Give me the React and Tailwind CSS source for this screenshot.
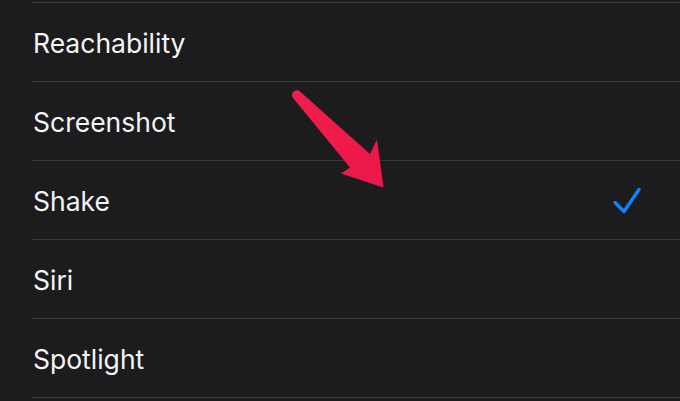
import React from 'react';

const items = ['Reachability', 'Screenshot', 'Shake', 'Siri', 'Spotlight'];

export default function App() {
    return (
        <div className="relative w-[680px] h-[401px] overflow-hidden bg-[#1c1c1e]" style={{ fontFamily: 'Inter, "Noto Sans", sans-serif' }}>
            {/* List */}
            <div className="pl-[32px] pt-[2px]">
                {items.map((name) => (
                    <div key={name} className="h-[79px] border-t border-[#3a3a3d] flex items-center">
                        <span className="text-[26.5px] text-[#f4f4f4] leading-none pt-[3px] pl-[1px]">{name}</span>
                        {name === 'Shake' && (
                            <svg className="ml-auto mr-[36px]" width="32" height="32" viewBox="0 0 32 32" fill="none">
                                <polyline points="3,18.5 12,27.5 27,5.5" stroke="#0a84ff" strokeWidth="3.4" strokeLinecap="round" strokeLinejoin="round" />
                            </svg>
                        )}
                    </div>
                ))}
                <div className="border-t border-[#3a3a3d]" />
            </div>

            {/* Red annotation arrow */}
            <svg className="absolute left-0 top-0" width="680" height="401" viewBox="0 0 680 401">
                <defs>
                    <linearGradient id="arrowFill" x1="296" y1="93" x2="383" y2="187" gradientUnits="userSpaceOnUse">
                        <stop offset="0" stopColor="#f01e4e" />
                        <stop offset="1" stopColor="#ec1748" />
                    </linearGradient>
                </defs>
                <path
                    d="M300,91.5 L370,154 L377,139.5 L383.5,187.5 L341,173.5 L350,167.5 L293.5,98.5 A4.6,4.6 0 0 1 300,91.5 Z"
                    fill="url(#arrowFill)"
                />
            </svg>
        </div>
    );
}
